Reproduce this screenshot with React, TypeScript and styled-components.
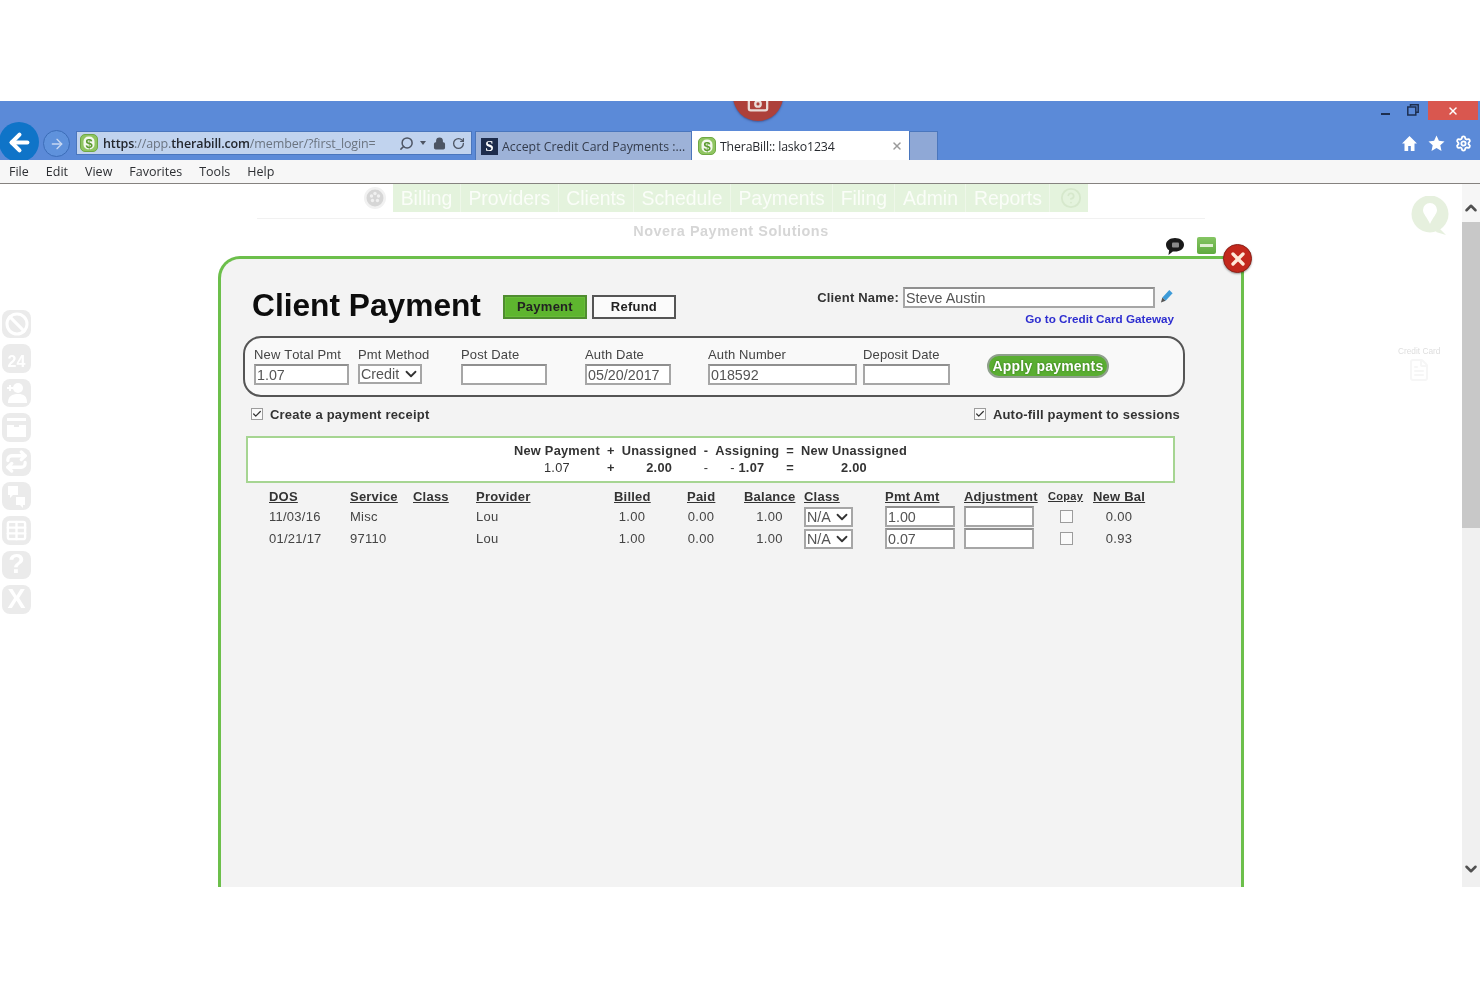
import React from 'react';
import styled, { createGlobalStyle } from 'styled-components';
import { ArrowLeft, ArrowRight, Search, Lock, RotateCw, Settings, ChevronUp, ChevronDown, Check, X, Ban, Repeat, Table, Camera, CircleHelp, FileText } from 'lucide-react';

const Global = createGlobalStyle`
  html, body { margin: 0; padding: 0; background: #fff; }
  body { font-family: "Liberation Sans", Arial, sans-serif; overflow: hidden; }
  * { box-sizing: border-box; }
`;

const Root = styled.div`
  width: 1480px; height: 987px; padding-top: 101px; background: #fff; overflow: hidden; filter: blur(0.4px);
`;
const Browser = styled.div`
  height: 786px; display: flex; flex-direction: column;
`;
const TitleBar = styled.header`
  position: relative; height: 59px; flex: none; background: #5b8ad8; overflow: hidden; display: flex; flex-direction: column;
`;
const RecordBadge = styled.div`
  position: absolute; left: 733px; top: -30px; width: 50px; height: 50px; border-radius: 50%; background: #ad403a;
  box-shadow: 0 1px 2px rgba(40,40,90,.5); display: flex; align-items: flex-end; justify-content: center; padding-bottom: 7px; color: #eadcd8;
`;
const WindowControls = styled.div`
  height: 24px; flex: none; display: flex; justify-content: flex-end; align-items: flex-start; padding-right: 2px; color: #1d2f50;
`;
const ControlGlyph = styled.div`
  width: 28px; height: 20px; display: flex; align-items: center; justify-content: center;
`;
const MinBar = styled.span`
  width: 9px; height: 2px; margin-top: 6px; background: #1d2f50;
`;
const RestoreIcon = styled.svg`
  width: 12px; height: 12px; margin-top: -2px;
`;
const CloseWindow = styled.div`
  width: 50px; height: 19px; margin-left: 1px; background: #d9574f; color: #fff; display: flex; align-items: center; justify-content: center;
`;
const NavRow = styled.div`
  flex: 1; display: flex; align-items: flex-start; padding-top: 6px;
`;
const BackButton = styled.div`
  width: 40px; height: 40px; margin: -9px 0 0 -1px; flex: none; border-radius: 50%; background: #0f74c8; color: #fff; display: flex; align-items: center; justify-content: center;
`;
const ForwardButton = styled.div`
  width: 27px; height: 27px; margin: -1px 0 0 4px; flex: none; border-radius: 50%; background: #5f92dc; border: 1px solid #3c6db8; color: #c8d8f2; display: flex; align-items: center; justify-content: center;
`;
const AddressBar = styled.div`
  width: 396px; height: 24px; margin-left: 6px; flex: none; background: #c1d3ee; border: 1px solid #4a76bd; display: flex; align-items: center; padding: 0 6px 0 3px;
`;
const AddressText = styled.div`
  margin-left: 5px; width: 284px; font: 12.5px "Open Sans", sans-serif; letter-spacing: -.12px; color: #6b7480; white-space: nowrap; overflow: hidden;
  b { font-weight: 600; color: #23272e; }
`;
const AddressTools = styled.div`
  flex: 1; display: flex; align-items: center; justify-content: flex-end; gap: 6px; color: #4d5564;
`;
const MirrorSearch = styled(Search)`
  transform: scaleX(-1);
`;
const Caret = styled.span`
  width: 0; height: 0; margin-right: 1px; border: 3px solid transparent; border-top: 4px solid #4d5564; border-bottom: 0;
`;
const Favicon = styled.svg`
  width: 18px; height: 18px; flex: none;
`;
const FaviconGlyph = styled.text`
  font: bold 13px "Liberation Sans", sans-serif; fill: #5a9a2e;
`;
const Tabs = styled.div`
  display: flex; margin-left: 3px; height: 29px; flex: none;
`;
const Tab = styled.div<{ $active?: boolean }>`
  width: 217px; height: 29px; display: flex; align-items: center; padding: 0 5px; gap: 4px;
  background: ${p => (p.$active ? '#fff' : '#9db2d8')};
  border: 1px solid ${p => (p.$active ? '#fff' : '#4a76bd')}; border-bottom: 0;
  font: 12.3px "Open Sans", sans-serif; letter-spacing: ${p => (p.$active ? '-.15px' : '.03px')}; color: ${p => (p.$active ? '#26292e' : '#343c4c')}; white-space: nowrap;
`;
const TabLabel = styled.span`
  flex: 1; min-width: 0;
`;
const TabFiller = styled.div`
  width: 29px; height: 29px; background: #8fa8d6; border: 1px solid #4a76bd; border-bottom: 0;
`;
const SiteMark = styled.span`
  width: 17px; height: 17px; flex: none; background: #1d2c4c; color: #fff; font: bold 15px/17px "Liberation Serif", serif; text-align: center;
`;
const BrowserTools = styled.div`
  margin-left: auto; padding-right: 8px; display: flex; align-items: center; gap: 10px; height: 24px; color: #fff;
`;
const ToolSvg = styled.svg`
  width: 17px; height: 17px; display: block;
`;
const MenuBar = styled.nav`
  height: 24px; flex: none; background: #f7f7f7; border-bottom: 1px solid #85827f; display: flex; align-items: center; padding: 0 0 1px 9px; gap: 17px;
  font: 12.5px "Open Sans", sans-serif; color: #2d2f33;
`;
const Content = styled.div`
  flex: 1; min-height: 0; display: flex; background: #fff;
`;
const Workspace = styled.div`
  flex: 1; display: grid; grid-template-columns: 218px 1026px 1fr; min-width: 0;
`;
const Rail = styled.aside`
  padding: 126px 0 0 2px; display: flex; flex-direction: column; gap: 6px;
`;
const RailIcon = styled.div<{ $small?: boolean }>`
  width: 29px; height: 28.4px; border-radius: 8px; background: #ebebeb; color: #fff; display: flex; align-items: center; justify-content: center;
  font: bold ${p => (p.$small ? 16 : 27)}px "Liberation Sans", sans-serif;
  ${p => (p.$small ? 'padding-top: 6px;' : '')}
`;
const RailSvg = styled.svg`
  width: 23px; height: 23px;
`;
const Center = styled.main`
  display: flex; flex-direction: column; min-height: 0;
`;
const TopMenuRow = styled.div`
  height: 28px; margin-right: 10px; display: flex; justify-content: center; align-items: stretch; flex: none;
`;
const Palette = styled.svg`
  width: 22px; height: 22px; margin: 3px 7px 0 0;
`;
const TopMenu = styled.div`
  display: flex; background: #e4f3dd; height: 28px;
`;
const TopMenuItem = styled.div`
  padding: 0 7.5px; border-right: 1px solid #eef7e9; color: #fafdf8; font: 19.4px/28px "Liberation Sans", sans-serif; white-space: nowrap;
  &:first-child { padding-left: 8px; }
`;
const TopHelp = styled.div`
  width: 38px; padding-left: 3px; display: flex; align-items: center; justify-content: center; color: #d6e8cc;
`;
const Divider = styled.div`
  height: 1px; margin: 6px 39px 0; background: #f1f1f1; flex: none;
`;
const Company = styled.div`
  height: 14px; margin-top: 4px; text-align: center; font: bold 14.4px/16px "Liberation Sans", sans-serif; letter-spacing: .55px; color: #d6d6d6; flex: none;
`;
const ModalTools = styled.div`
  height: 19px; padding-right: 28px; display: flex; justify-content: flex-end; align-items: flex-start; gap: 12px; flex: none;
`;
const ChatIcon = styled.svg`
  width: 20px; height: 19px;
`;
const NoteIcon = styled.div`
  width: 19px; height: 17px; border-radius: 2px; background: linear-gradient(#85c563, #5faa3e); display: flex; align-items: center; justify-content: center;
  &::after { content: ""; width: 13px; height: 3px; background: #e0efd2; }
`;
const Modal = styled.section`
  position: relative; flex: 1; min-height: 0; background: #f3f3f3; border: 3px solid #6cbf4b; border-bottom: 0; border-radius: 22px 10px 0 0;
  display: flex; flex-direction: column;
`;
const CloseBadge = styled.div`
  position: absolute; right: -11px; top: -15px; width: 29px; height: 29px; border-radius: 50%; background: #c3281c; border: 1px solid #8d2018; color: #ffe9d8;
  display: flex; align-items: center; justify-content: center; box-shadow: 0 1px 2px rgba(0,0,0,.35);
`;
const Header = styled.div`
  height: 77px; flex: none; display: flex; justify-content: space-between; padding: 28px 67px 0 31px;
`;
const TitleGroup = styled.div`
  display: flex; align-items: flex-start;
`;
const Title = styled.h1`
  margin: 0 22px 0 0; font: bold 31.7px/37px "Liberation Sans", sans-serif; color: #0d0d0d; white-space: nowrap;
`;
const ModeButton = styled.div<{ $on?: boolean }>`
  width: 84px; height: 24px; margin: 8px 5px 0 0; border: 2px solid ${p => (p.$on ? '#4f8c30' : '#555')}; background: ${p => (p.$on ? '#5eb52f' : '#fbfbfb')};
  ${p => (p.$on ? 'box-shadow: inset 0 0 0 1px #68bd38;' : '')}
  text-align: center; font: bold 13px/20px "Liberation Sans", sans-serif; letter-spacing: .25px; color: #222;
`;
const ClientGroup = styled.div`
  display: flex; flex-direction: column; align-items: flex-end;
`;
const ClientRow = styled.div`
  display: flex; align-items: center; height: 21px;
`;
const ClientLabel = styled.label`
  margin-right: 4px; font: bold 13px "Liberation Sans", sans-serif; letter-spacing: .2px; color: #333;
`;
const Pencil = styled.svg`
  width: 14px; height: 16px; margin-left: 5px; margin-top: -4px;
`;
const GatewayLink = styled.a`
  margin-top: 4px; font: bold 11.7px/14px "Liberation Sans", sans-serif; color: #2e2ed0; text-decoration: none;
`;
const TextBox = styled.input<{ $w: number }>`
  width: ${p => p.$w}px; height: 21px; padding: 0 1px; border: 2px solid #a6a6a6; border-top-color: #8f8f8f; border-radius: 0; background: #fff;
  font: 14.3px "Liberation Sans", sans-serif; color: #555; outline: none; display: block;
`;
const Panel = styled.div`
  width: 942px; height: 61px; margin-left: 22px; flex: none; padding: 9px 0 0 9px; border: 2px solid #555; border-radius: 18px; background: #f9f9f9;
  display: grid; grid-template-columns: 104px 103px 124px 123px 155px 124px 1fr;
`;
const Field = styled.div`
  display: flex; flex-direction: column; align-items: flex-start;
`;
const FieldLabel = styled.label`
  height: 17px; font: 13px/15px "Liberation Sans", sans-serif; font-kerning: none; letter-spacing: .13px; color: #444; white-space: nowrap;
`;
const SelectShell = styled.div<{ $w: number }>`
  position: relative; width: ${p => p.$w}px; height: 20px; border: 2px solid #a6a6a6; background: #fff; font: 14.3px/16px "Liberation Sans", sans-serif; color: #555;
  svg { position: absolute; right: 0; top: -1px; color: #333; }
`;
const NativeSelect = styled.select`
  appearance: none; border: 0; background: transparent; width: 100%; height: 100%; padding: 0 0 0 1px; font: inherit; color: inherit; outline: none; display: block;
`;
const ApplyButton = styled.button`
  width: 122px; height: 24px; margin-top: 7px; padding: 0; border: 2px solid #8fa08c; border-radius: 12px; background: #5aae32; color: #fff;
  font: bold 14px "Liberation Sans", sans-serif; letter-spacing: .2px; text-shadow: 0 0 2px #2d6b15;
`;
const Options = styled.div`
  height: 20px; margin-top: 7px; padding: 0 61px 0 30px; flex: none; display: flex; justify-content: space-between; align-items: center;
`;
const OptionLabel = styled.label`
  display: flex; align-items: center; gap: 7px; font: bold 13px "Liberation Sans", sans-serif; letter-spacing: .2px; color: #333;
`;
const CheckBox = styled.span`
  width: 12px; height: 12px; border: 1px solid #9c9c9c; background: #fafafa; color: #333; display: inline-flex; align-items: center; justify-content: center; flex: none;
`;
const RowCheck = styled(CheckBox)`
  width: 13px; height: 13px; margin-right: 9px;
`;
const Summary = styled.div`
  width: 929px; height: 47px; margin: 12px 0 0 25px; flex: none; background: #fff; border: 2px solid #a6d592; display: flex; justify-content: center; align-items: center;
`;
const SummaryGrid = styled.div`
  display: grid; grid-template-columns: repeat(7, auto); column-gap: 7px; row-gap: 3px; justify-items: center;
`;
const SumCell = styled.div<{ $strong?: boolean }>`
  font: ${p => (p.$strong ? 'bold' : 'normal')} 12.8px/14px "Liberation Sans", sans-serif; letter-spacing: .25px; color: #333; white-space: nowrap;
  span { font-weight: normal; }
`;
const TABLE_COLUMNS = '81px 63px 63px 138px 73px 57px 60px 81px 79px 84px 45px 52px';
const TableHead = styled.div`
  height: 18px; margin-top: 4px; padding-left: 48px; flex: none; display: grid; grid-template-columns: ${TABLE_COLUMNS}; align-items: center;
`;
const Th = styled.div<{ $tiny?: boolean }>`
  font: bold ${p => (p.$tiny ? 11 : 13)}px "Liberation Sans", sans-serif; letter-spacing: ${p => (p.$tiny ? .3 : .22)}px; text-decoration: underline; color: #333; white-space: nowrap;
`;
const TableRow = styled.div`
  height: 21px; margin-top: 1px; padding-left: 48px; flex: none; display: grid; grid-template-columns: ${TABLE_COLUMNS}; align-items: center;
`;
const Td = styled.div<{ $w?: number }>`
  font: 13px "Liberation Sans", sans-serif; letter-spacing: .25px; color: #444; white-space: nowrap;
  ${p => (p.$w ? `width: ${p.$w}px; text-align: center;` : '')}
`;
const CheckCell = styled.div`
  display: flex; justify-content: center;
`;
const Side = styled.aside`
  padding: 12px 0 0 167px; display: flex; flex-direction: column;
`;
const Bulb = styled.svg`
  width: 38px; height: 40px; flex: none;
`;
const CreditCaption = styled.div`
  margin: 110px 0 0 -13px; font: 8.3px/10px "Liberation Sans", sans-serif; color: #dedede; white-space: nowrap;
`;
const CreditDoodle = styled.div`
  margin: 2px 0 0 -4px; color: #f6f6f6;
`;
const Scrollbar = styled.div`
  width: 18px; flex: none; display: flex; flex-direction: column; background: #f0f0f0;
`;
const ScrollEnd = styled.div<{ $top?: boolean }>`
  height: ${p => (p.$top ? 38 : 37)}px; background: ${p => (p.$top ? '#f6f6f6' : '#f0f0f0')}; color: #505050; display: flex; justify-content: center;
  align-items: ${p => (p.$top ? 'flex-end' : 'center')}; padding: ${p => (p.$top ? '0 0 5px' : '0')};
`;
const ScrollThumb = styled.div`
  height: 306px; background: #c8c8c8; flex: none;
`;
const ScrollTrack = styled.div`
  flex: 1;
`;

const DollarIcon = () => (
  <Favicon viewBox="0 0 18 18">
    <rect x=".5" y=".5" width="17" height="17" rx="4.5" fill="#8fc561" stroke="#6fa844" />
    <rect x="3.5" y="2.5" width="11" height="13" rx="5" fill="#f4f8ee" />
    <FaviconGlyph x="9" y="13.500" textAnchor="middle">$</FaviconGlyph>
  </Favicon>
);

const topItems = ['Billing', 'Providers', 'Clients', 'Schedule', 'Payments', 'Filing', 'Admin', 'Reports'];
const fields = [
  { label: 'New Total Pmt', value: '1.07', w: 95 },
  { label: 'Pmt Method', select: 'Credit', w: 64 },
  { label: 'Post Date', value: '', w: 86 },
  { label: 'Auth Date', value: '05/20/2017', w: 86 },
  { label: 'Auth Number', value: '018592', w: 149 },
  { label: 'Deposit Date', value: '', w: 87 },
];
const heads = ['DOS', 'Service', 'Class', 'Provider', 'Billed', 'Paid', 'Balance', 'Class', 'Pmt Amt', 'Adjustment', 'Copay', 'New Bal'];
const rows = [
  { dos: '11/03/16', svc: 'Misc', pmt: '1.00', nb: '0.00' },
  { dos: '01/21/17', svc: '97110', pmt: '0.07', nb: '0.93' },
];

export default function App() {
  return (
    <Root>
      <Global />
      <Browser>
        <TitleBar>
          <RecordBadge><Camera size={22} strokeWidth={2.5} /></RecordBadge>
          <WindowControls>
            <ControlGlyph><MinBar /></ControlGlyph>
            <ControlGlyph>
              <RestoreIcon viewBox="0 0 12 12" fill="none" stroke="#1d2f50" strokeWidth="1.5"><path d="M3.5 2.5V.8h7.700v7.400H9" /><rect x=".8" y="3" width="8" height="8" /></RestoreIcon>
            </ControlGlyph>
            <CloseWindow><X size={12} strokeWidth={3} /></CloseWindow>
          </WindowControls>
          <NavRow>
            <BackButton><ArrowLeft size={27} strokeWidth={3.6} /></BackButton>
            <ForwardButton><ArrowRight size={16} strokeWidth={2} /></ForwardButton>
            <AddressBar>
              <DollarIcon />
              <AddressText><b>https</b>://app.<b>therabill.com</b>/member/?first_login=</AddressText>
              <AddressTools>
                <MirrorSearch size={15} strokeWidth={2.4} />
                <Caret />
                <Lock size={13} strokeWidth={2.5} fill="#4d5564" />
                <RotateCw size={13} strokeWidth={2.4} />
              </AddressTools>
            </AddressBar>
            <Tabs>
              <Tab>
                <SiteMark>S</SiteMark>
                <TabLabel>Accept Credit Card Payments :...</TabLabel>
              </Tab>
              <Tab $active>
                <DollarIcon />
                <TabLabel>TheraBill:: lasko1234</TabLabel>
                <X size={12} strokeWidth={3} color="#9a9a9a" />
              </Tab>
              <TabFiller />
            </Tabs>
            <BrowserTools>
              <ToolSvg viewBox="0 0 17 17" fill="#fff"><path d="M8.500 1 1 8.500h2.500V16h3.700v-5h2.600v5h3.700V8.500H16z" /></ToolSvg>
              <ToolSvg viewBox="0 0 17 17" fill="#fff"><path d="m8.500.5 2.400 5.300 5.600.6-4.200 3.900 1.200 5.700-5-2.900-5 2.900 1.200-5.700L.5 6.400l5.600-.6z" /></ToolSvg>
              <Settings size={17} strokeWidth={2.6} />
            </BrowserTools>
          </NavRow>
        </TitleBar>
        <MenuBar>
          {['File', 'Edit', 'View', 'Favorites', 'Tools', 'Help'].map(m => <span key={m}>{m}</span>)}
        </MenuBar>
        <Content>
          <Workspace>
            <Rail>
              <RailIcon><Ban size={24} strokeWidth={3} /></RailIcon>
              <RailIcon $small>24</RailIcon>
              <RailIcon>
                <RailSvg viewBox="0 0 23 23" fill="#fff"><circle cx="13" cy="7" r="5" /><path d="M3 22c0-7 4-9 10-9s9 2 9 9z" /><path d="M2 6h6v2H2zM4 4h2v6H4z" /></RailSvg>
              </RailIcon>
              <RailIcon>
                <RailSvg viewBox="0 0 23 23" fill="#fff"><path d="M2 2h19v3H2zM2 9h7v2h5V9h7v12H2z" /></RailSvg>
              </RailIcon>
              <RailIcon><Repeat size={23} strokeWidth={3.4} /></RailIcon>
              <RailIcon>
                <RailSvg viewBox="0 0 23 23" fill="#fff"><path d="M3 1h10v9H8l-3 3v-3H3zM11 12h9v8h-2v3l-3-3h-4z" /></RailSvg>
              </RailIcon>
              <RailIcon><Table size={23} strokeWidth={2.5} /></RailIcon>
              <RailIcon>?</RailIcon>
              <RailIcon>X</RailIcon>
            </Rail>
            <Center>
              <TopMenuRow>
                <Palette viewBox="0 0 22 22">
                  <circle cx="11" cy="11" r="11" fill="#f1f1f1" />
                  <circle cx="11" cy="11" r="8.500" fill="#d6d6d6" />
                  <circle cx="7.500" cy="9" r="1.700" fill="#f0f0f0" /><circle cx="11" cy="6.500" r="1.700" fill="#f0f0f0" /><circle cx="14.500" cy="9" r="1.700" fill="#f0f0f0" /><circle cx="13.500" cy="13.500" r="1.700" fill="#f0f0f0" /><circle cx="8.500" cy="13.500" r="1.700" fill="#f0f0f0" />
                </Palette>
                <TopMenu>
                  {topItems.map(t => <TopMenuItem key={t}>{t}</TopMenuItem>)}
                  <TopHelp><CircleHelp size={22} strokeWidth={2} /></TopHelp>
                </TopMenu>
              </TopMenuRow>
              <Divider />
              <Company>Novera Payment Solutions</Company>
              <ModalTools>
                <ChatIcon viewBox="0 0 20 19">
                  <path d="M10 1c5 0 9 2.800 9 6.800s-4 6.800-9 6.800c-.8 0-1.500 0-2.200-.2L3.500 18l.6-4.700C2 12 1 10 1 7.800 1 3.800 5 1 10 1z" fill="#1a1a1a" />
                  <rect x="7" y="5.500" width="7" height="5" rx="1" fill="#8a8a8a" />
                </ChatIcon>
                <NoteIcon />
              </ModalTools>
              <Modal>
                <CloseBadge><X size={20} strokeWidth={4} /></CloseBadge>
                <Header>
                  <TitleGroup>
                    <Title>Client Payment</Title>
                    <ModeButton $on>Payment</ModeButton>
                    <ModeButton>Refund</ModeButton>
                  </TitleGroup>
                  <ClientGroup>
                    <ClientRow>
                      <ClientLabel>Client Name:</ClientLabel>
                      <TextBox $w={252} readOnly defaultValue="Steve Austin" />
                      <Pencil viewBox="0 0 15 16">
                        <path d="M10 1.500 13.500 5 6 13 2.500 9.500z" fill="#3d9bd8" />
                        <path d="M2.500 9.500 6 13l-5 2z" fill="#555" />
                      </Pencil>
                    </ClientRow>
                    <GatewayLink href="#">Go to Credit Card Gateway</GatewayLink>
                  </ClientGroup>
                </Header>
                <Panel>
                  {fields.map(f => (
                    <Field key={f.label}>
                      <FieldLabel>{f.label}</FieldLabel>
                      {f.select ? (
                        <SelectShell $w={f.w}>
                          <NativeSelect defaultValue={f.select}><option>{f.select}</option></NativeSelect>
                          <ChevronDown size={18} strokeWidth={2.4} />
                        </SelectShell>
                      ) : (
                        <TextBox $w={f.w} readOnly defaultValue={f.value} />
                      )}
                    </Field>
                  ))}
                  <Field><ApplyButton>Apply payments</ApplyButton></Field>
                </Panel>
                <Options>
                  <OptionLabel><CheckBox><Check size={12} strokeWidth={3} /></CheckBox>Create a payment receipt</OptionLabel>
                  <OptionLabel><CheckBox><Check size={12} strokeWidth={3} /></CheckBox>Auto-fill payment to sessions</OptionLabel>
                </Options>
                <Summary>
                  <SummaryGrid>
                    {['New Payment', '+', 'Unassigned', '-', 'Assigning', '=', 'New Unassigned'].map(s => <SumCell key={s} $strong>{s}</SumCell>)}
                    <SumCell>1.07</SumCell><SumCell $strong>+</SumCell><SumCell $strong>2.00</SumCell><SumCell>-</SumCell><SumCell $strong><span>- </span>1.07</SumCell><SumCell $strong>=</SumCell><SumCell $strong>2.00</SumCell>
                  </SummaryGrid>
                </Summary>
                <TableHead>
                  {heads.map((h, i) => <Th key={i} $tiny={h === 'Copay'}>{h}</Th>)}
                </TableHead>
                {rows.map(r => (
                  <TableRow key={r.dos}>
                    <Td>{r.dos}</Td>
                    <Td>{r.svc}</Td>
                    <Td />
                    <Td>Lou</Td>
                    <Td $w={36}>1.00</Td>
                    <Td $w={28}>0.00</Td>
                    <Td $w={51}>1.00</Td>
                    <SelectShell $w={49}>
                      <NativeSelect defaultValue="N/A"><option>N/A</option></NativeSelect>
                      <ChevronDown size={18} strokeWidth={2.4} />
                    </SelectShell>
                    <TextBox $w={70} readOnly defaultValue={r.pmt} />
                    <TextBox $w={70} readOnly defaultValue="" />
                    <CheckCell><RowCheck /></CheckCell>
                    <Td $w={52}>{r.nb}</Td>
                  </TableRow>
                ))}
              </Modal>
            </Center>
            <Side>
              <Bulb viewBox="0 0 38 40">
                <circle cx="19" cy="18" r="18.500" fill="#e6f0de" />
                <path d="M27 31l8 8-10-3z" fill="#e6f0de" />
                <path d="M19 7a7 7 0 0 1 7 7c0 4-4 7-7 14-3-7-7-10-7-14a7 7 0 0 1 7-7z" fill="#fff" />
              </Bulb>
              <CreditCaption>Credit Card</CreditCaption>
              <CreditDoodle><FileText size={24} strokeWidth={2} /></CreditDoodle>
            </Side>
          </Workspace>
          <Scrollbar>
            <ScrollEnd $top><ChevronUp size={18} strokeWidth={3.4} /></ScrollEnd>
            <ScrollThumb />
            <ScrollTrack />
            <ScrollEnd><ChevronDown size={18} strokeWidth={3.4} /></ScrollEnd>
          </Scrollbar>
        </Content>
      </Browser>
    </Root>
  );
}
